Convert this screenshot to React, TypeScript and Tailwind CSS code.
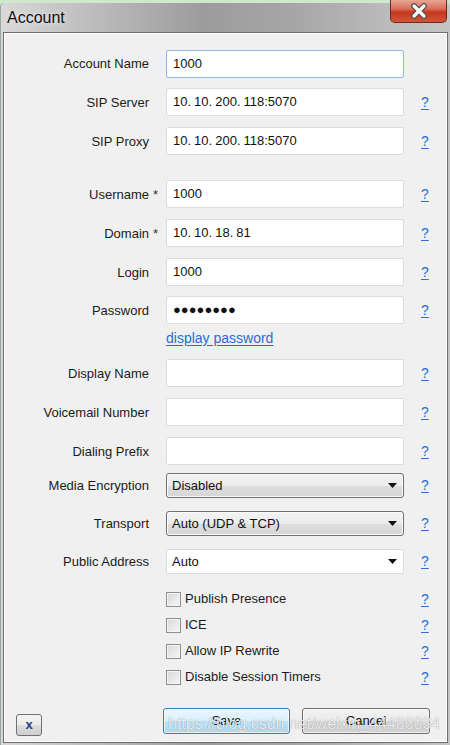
import React from "react";

const font = { fontFamily: '"Liberation Sans", Arial, sans-serif' };

function Ip({ v }: { v: string }) {
  const parts = v.split(".");
  return (
    <>
      {parts.map((p, i) => (
        <React.Fragment key={i}>
          {p}
          {i < parts.length - 1 && <span className="mr-[3px]">.</span>}
        </React.Fragment>
      ))}
    </>
  );
}

function Help() {
  return (
    <span className="ml-[17px] text-[14px] text-[#2a6fd3] underline underline-offset-2">?</span>
  );
}

function Label({ text, star }: { text: string; star?: boolean }) {
  return (
    <>
      <span className="w-[145px] text-right text-[13px] text-[#1b1b1b] leading-none">{text}</span>
      <span className="w-[17px] text-[13px] text-[#333] pl-[4px] leading-none">{star ? "*" : ""}</span>
    </>
  );
}

function TextRow({
  label,
  value,
  star,
  focused,
  className,
  help = true,
}: {
  label: string;
  value?: React.ReactNode;
  star?: boolean;
  focused?: boolean;
  className: string;
  help?: boolean;
}) {
  return (
    <div className={"flex items-center " + className}>
      <Label text={label} star={star} />
      <div
        className={
          "w-[238px] h-[28px] bg-white rounded-[2px] flex items-center pl-[6px] text-[13px] text-[#111] " +
          (focused ? "border border-[#8db9e6]" : "border border-[#dadcdf]")
        }
      >
        {value}
      </div>
      {help && <Help />}
    </div>
  );
}

function Arrow() {
  return (
    <svg width="9" height="5" viewBox="0 0 9 5" className="ml-auto mr-[6px]">
      <path d="M0 0 L9 0 L4.5 5 Z" fill="#111" />
    </svg>
  );
}

function ComboRow({
  label,
  value,
  editable,
  className,
}: {
  label: string;
  value: string;
  editable?: boolean;
  className: string;
}) {
  return (
    <div className={"flex items-center " + className}>
      <Label text={label} />
      <div
        className={
          "w-[238px] h-[25px] flex items-center pl-[5px] text-[13px] text-[#111] " +
          (editable
            ? "bg-white border border-[#dadcdf] rounded-[2px]"
            : "border border-[#707070] rounded-[3px] bg-[linear-gradient(#f3f3f3_0%,#ececec_50%,#dedede_51%,#d6d6d6_100%)] shadow-[inset_0_0_0_1px_#fafafa]")
        }
      >
        {value}
        <Arrow />
      </div>
      <Help />
    </div>
  );
}

function CheckRow({ label, className }: { label: string; className: string }) {
  return (
    <div className={"flex items-center h-[20px] " + className}>
      <div className="w-[162px]" />
      <div className="w-[15px] h-[15px] border border-[#8e8f8f] bg-[linear-gradient(135deg,#d8d8d8,#f6f6f6)] shadow-[inset_0_0_0_1px_#f4f4f4]" />
      <span className="ml-[4px] w-[219px] text-[13px] text-[#1b1b1b]">{label}</span>
      <Help />
    </div>
  );
}

export default function App() {
  return (
    <div className="w-[450px] h-[745px] bg-[#cfe7cd] relative overflow-hidden" style={font}>
      <div className="mt-[3px] h-[742px] flex flex-col bg-[linear-gradient(90deg,#d8d8d8_0%,#bdbdbd_20%,#9c9c9c_45%,#a6a6a6_65%,#bababa_85%,#c4c4c4_100%)] rounded-t-[4px] border-l border-[#9aa89a]">
        <div className="h-[29px] flex items-center pl-[6px] text-[16px] text-[#111] shrink-0">
          <span className="[text-shadow:0_0_6px_rgba(255,255,255,0.9)]">Account</span>
        </div>
        <div className="flex-1 mx-[2px] mb-[2px] border border-[#6f6f6f] bg-[#f0f0f0] flex flex-col shadow-[inset_0_0_0_1px_#ffffff]">
          <div className="flex flex-col pt-[17px]">
            <TextRow label="Account Name" value="1000" focused help={false} className="h-[27px]" />
            <TextRow label="SIP Server" value={<Ip v="10.10.200.118:5070" />} className="mt-[11px]" />
            <TextRow label="SIP Proxy" value={<Ip v="10.10.200.118:5070" />} className="mt-[11px]" />
            <TextRow label="Username" star value="1000" className="mt-[25px]" />
            <TextRow label="Domain" star value={<Ip v="10.10.18.81" />} className="mt-[11px]" />
            <TextRow label="Login" value="1000" className="mt-[11px]" />
            <TextRow
              label="Password"
              value={<span className="text-[13px] tracking-[0px] font-bold">●●●●●●●●</span>}
              className="mt-[10px]"
            />
            <div className="flex mt-[6px] h-[16px] items-center">
              <div className="w-[162px]" />
              <span className="text-[14px] text-[#1f6fd6] underline underline-offset-2">display password</span>
            </div>
            <TextRow label="Display Name" className="mt-[13px]" />
            <TextRow label="Voicemail Number" className="mt-[11px]" />
            <TextRow label="Dialing Prefix" className="mt-[11px]" />
            <ComboRow label="Media Encryption" value="Disabled" className="mt-[8px]" />
            <ComboRow label="Transport" value="Auto (UDP & TCP)" className="mt-[13px]" />
            <ComboRow label="Public Address" value="Auto" editable className="mt-[13px]" />
            <CheckRow label="Publish Presence" className="mt-[15px]" />
            <CheckRow label="ICE" className="mt-[6px]" />
            <CheckRow label="Allow IP Rewrite" className="mt-[6px]" />
            <CheckRow label="Disable Session Timers" className="mt-[6px]" />
            <div className="flex items-start mt-[21px]">
              <div className="ml-[12px] mt-[6px] w-[26px] h-[22px] rounded-[3px] border border-[#707070] bg-[linear-gradient(#f4f4f4_0%,#ebebeb_50%,#dddddd_51%,#cfcfcf_100%)] flex items-center justify-center text-[13px] font-bold text-[#1b3f8f] leading-none pb-[2px]">
                x
              </div>
              <div className="ml-[121px] w-[127px] h-[26px] rounded-[3px] border border-[#3c7fb1] bg-[linear-gradient(#eaf6fd_0%,#d9f0fc_50%,#bee6fd_51%,#a7d9f5_100%)] shadow-[inset_0_0_0_1px_#ffffffaa] flex items-center justify-center text-[13px] text-[#111]">
                Save
              </div>
              <div className="ml-[12px] w-[128px] h-[26px] rounded-[3px] border border-[#707070] bg-[linear-gradient(#f2f2f2_0%,#ebebeb_50%,#dddddd_51%,#cfcfcf_100%)] shadow-[inset_0_0_0_1px_#ffffffaa] flex items-center justify-center text-[13px] text-[#111]">
                Cancel
              </div>
            </div>
          </div>
        </div>
      </div>
      <div className="absolute top-0 right-[3px] w-[57px] h-[23px] rounded-b-[5px] border border-t-0 border-[#6b2a1e] bg-[linear-gradient(#e9a693_0%,#d8705a_40%,#c4381f_55%,#d0553a_100%)] flex items-center justify-center">
        <svg width="20" height="16" viewBox="0 0 20 16">
          <path d="M5 3 L15 13 M15 3 L5 13" stroke="#4a4a4a" strokeWidth="5.5" strokeLinecap="round" />
          <path d="M5 3 L15 13 M15 3 L5 13" stroke="#ffffff" strokeWidth="3.2" strokeLinecap="round" />
        </svg>
      </div>
      <div className="absolute left-[168px] top-[712px] text-[16px] text-[#ffffffd9] [text-shadow:0_0_1px_rgba(0,0,0,0.45)] whitespace-nowrap pointer-events-none">
        https://blog.csdn.net/weixin_44486034
      </div>
    </div>
  );
}
